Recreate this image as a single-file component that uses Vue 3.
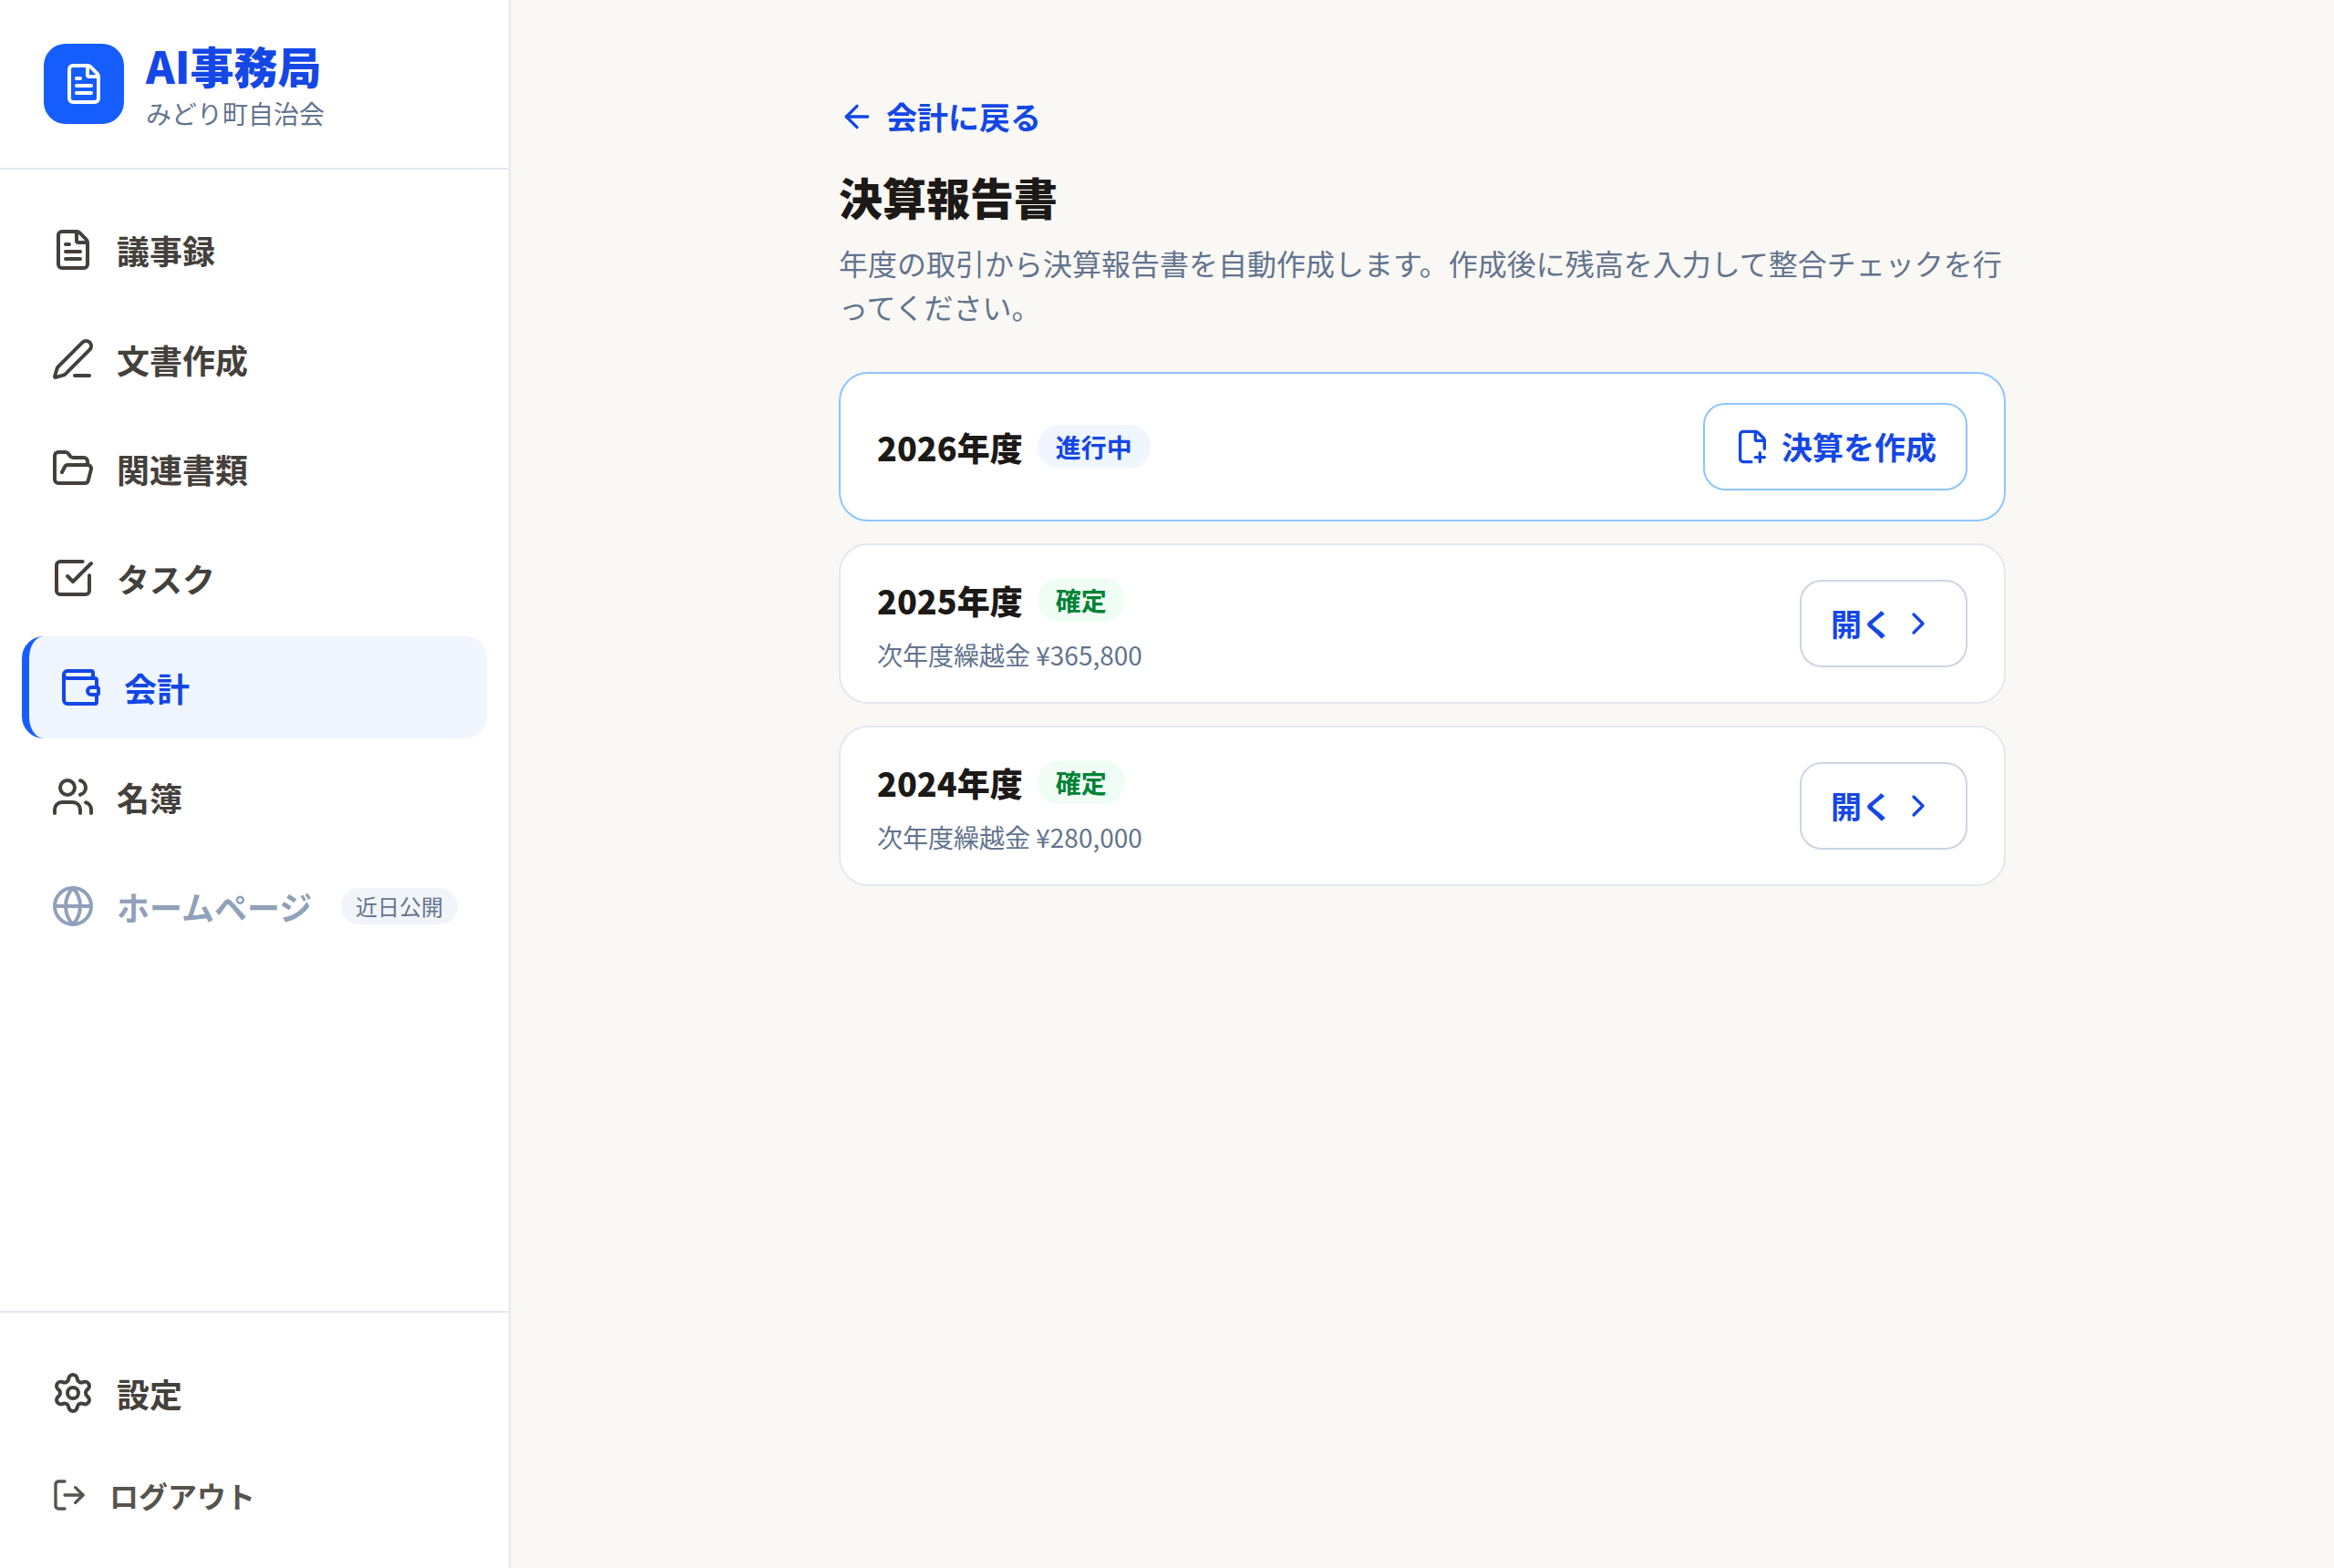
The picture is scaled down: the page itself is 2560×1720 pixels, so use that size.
<!-- src/App.vue -->
<template>
  <div class="app-shell">
    <aside class="sidebar">
      <div class="brand">
        <div class="brand-logo">
          <svg class="icon" viewBox="0 0 24 24">
            <path v-for="d in icons.file" :key="d" :d="d" />
          </svg>
        </div>
        <div class="brand-text">
          <p class="brand-name">AI事務局</p>
          <p class="brand-org">みどり町自治会</p>
        </div>
      </div>

      <nav class="nav">
        <a
          v-for="item in navItems"
          :key="item.label"
          class="nav-item"
          :class="{ active: item.active, disabled: item.soon }"
        >
          <svg class="icon" viewBox="0 0 24 24">
            <path v-for="d in icons[item.icon]" :key="d" :d="d" />
          </svg>
          <span>{{ item.label }}</span>
          <span v-if="item.soon" class="soon-tag">近日公開</span>
        </a>
      </nav>

      <div class="sidebar-footer">
        <a class="nav-item">
          <svg class="icon" viewBox="0 0 24 24">
            <path v-for="d in icons.settings" :key="d" :d="d" />
          </svg>
          <span>設定</span>
        </a>
        <button class="logout">
          <svg class="icon icon-sm" viewBox="0 0 24 24">
            <path v-for="d in icons.logout" :key="d" :d="d" />
          </svg>
          <span>ログアウト</span>
        </button>
      </div>
    </aside>

    <main class="main">
      <div class="content">
        <a class="back-link">
          <svg class="icon icon-sm" viewBox="0 0 24 24">
            <path v-for="d in icons.arrowLeft" :key="d" :d="d" />
          </svg>
          <span>会計に戻る</span>
        </a>
        <h1 class="page-title">決算報告書</h1>
        <p class="page-lead">
          年度の取引から決算報告書を自動作成します。作成後に残高を入力して整合チェックを行ってください。
        </p>

        <ul class="year-list">
          <li
            v-for="y in years"
            :key="y.year"
            class="year-card"
            :class="{ current: !y.closed }"
          >
            <div>
              <div class="year-head">
                <span class="year-name">{{ y.year }}年度</span>
                <span class="badge" :class="y.closed ? 'badge-done' : 'badge-open'">
                  {{ y.closed ? '確定' : '進行中' }}
                </span>
              </div>
              <p v-if="y.closed" class="year-carry">次年度繰越金 {{ formatYen(y.carry) }}</p>
            </div>
            <button v-if="y.closed" class="btn btn-open">
              <span>開く</span>
              <svg class="icon icon-sm" viewBox="0 0 24 24">
                <path v-for="d in icons.chevronRight" :key="d" :d="d" />
              </svg>
            </button>
            <button v-else class="btn btn-create">
              <svg class="icon icon-sm" viewBox="0 0 24 24">
                <path v-for="d in icons.filePlus" :key="d" :d="d" />
              </svg>
              <span>決算を作成</span>
            </button>
          </li>
        </ul>
      </div>
    </main>
  </div>
</template>

<script setup>
import { ref } from 'vue'

// 線アイコンのパス（24x24 グリッド）
const icons = {
  file: [
    'M6 22a2 2 0 0 1-2-2V4a2 2 0 0 1 2-2h8a2.4 2.4 0 0 1 1.704.706l3.588 3.588A2.4 2.4 0 0 1 20 8v12a2 2 0 0 1-2 2z',
    'M14 2v5a1 1 0 0 0 1 1h5',
    'M10 9H8',
    'M16 13H8',
    'M16 17H8'
  ],
  pen: [
    'M13 21h8',
    'M21.174 6.812a1 1 0 0 0-3.986-3.987L3.842 16.174a2 2 0 0 0-.5.83l-1.321 4.352a.5.5 0 0 0 .623.622l4.353-1.32a2 2 0 0 0 .83-.497z'
  ],
  folder: [
    'm6 14 1.5-2.9A2 2 0 0 1 9.24 10H20a2 2 0 0 1 1.94 2.5l-1.54 6a2 2 0 0 1-1.95 1.5H4a2 2 0 0 1-2-2V5a2 2 0 0 1 2-2h3.9a2 2 0 0 1 1.69.9l.81 1.2a2 2 0 0 0 1.67.9H18a2 2 0 0 1 2 2v2'
  ],
  check: [
    'M21 10.656V19a2 2 0 0 1-2 2H5a2 2 0 0 1-2-2V5a2 2 0 0 1 2-2h12.344',
    'm9 11 3 3L22 4'
  ],
  wallet: [
    'M19 7V4a1 1 0 0 0-1-1H5a2 2 0 0 0 0 4h15a1 1 0 0 1 1 1v4h-3a2 2 0 0 0 0 4h3a1 1 0 0 0 1-1v-2a1 1 0 0 0-1-1',
    'M3 5v14a2 2 0 0 0 2 2h15a1 1 0 0 0 1-1v-4'
  ],
  users: [
    'M16 21v-2a4 4 0 0 0-4-4H6a4 4 0 0 0-4 4v2',
    'M16 3.128a4 4 0 0 1 0 7.744',
    'M22 21v-2a4 4 0 0 0-3-3.87',
    'M5 7a4 4 0 1 0 8 0a4 4 0 1 0-8 0'
  ],
  globe: [
    'M2 12a10 10 0 1 0 20 0a10 10 0 1 0-20 0',
    'M12 2a14.5 14.5 0 0 0 0 20 14.5 14.5 0 0 0 0-20',
    'M2 12h20'
  ],
  settings: [
    'M9.671 4.136a2.34 2.34 0 0 1 4.659 0 2.34 2.34 0 0 0 3.319 1.915 2.34 2.34 0 0 1 2.33 4.033 2.34 2.34 0 0 0 0 3.831 2.34 2.34 0 0 1-2.33 4.033 2.34 2.34 0 0 0-3.319 1.915 2.34 2.34 0 0 1-4.659 0 2.34 2.34 0 0 0-3.32-1.915 2.34 2.34 0 0 1-2.33-4.033 2.34 2.34 0 0 0 0-3.831A2.34 2.34 0 0 1 6.35 6.051a2.34 2.34 0 0 0 3.319-1.915',
    'M9 12a3 3 0 1 0 6 0a3 3 0 1 0-6 0'
  ],
  logout: ['m16 17 5-5-5-5', 'M21 12H9', 'M9 21H5a2 2 0 0 1-2-2V5a2 2 0 0 1 2-2h4'],
  arrowLeft: ['m12 19-7-7 7-7', 'M19 12H5'],
  chevronRight: ['m9 18 6-6-6-6'],
  filePlus: [
    'M11.35 22H6a2 2 0 0 1-2-2V4a2 2 0 0 1 2-2h8a2.4 2.4 0 0 1 1.706.706l3.588 3.588A2.4 2.4 0 0 1 20 8v5.35',
    'M14 2v5a1 1 0 0 0 1 1h5',
    'M14 19h6',
    'M17 16v6'
  ]
}

const navItems = ref([
  { label: '議事録', icon: 'file' },
  { label: '文書作成', icon: 'pen' },
  { label: '関連書類', icon: 'folder' },
  { label: 'タスク', icon: 'check' },
  { label: '会計', icon: 'wallet', active: true },
  { label: '名簿', icon: 'users' },
  { label: 'ホームページ', icon: 'globe', soon: true }
])

const years = ref([
  { year: 2026, closed: false },
  { year: 2025, closed: true, carry: 365800 },
  { year: 2024, closed: true, carry: 280000 }
])

const formatYen = (n) => '¥' + n.toLocaleString('en-US')
</script>

<style>
body {
  margin: 0;
  background: #faf8f4;
}
</style>

<style scoped>
.app-shell {
  display: flex;
  height: 100vh;
  overflow: hidden;
  background: #faf8f4;
  color: #1c1917;
  font-family: "Noto Sans CJK JP", sans-serif;
  font-size: 36px;
  line-height: 1.5;
}

p,
h1,
ul {
  margin: 0;
  padding: 0;
}

.icon {
  width: 48px;
  height: 48px;
  flex-shrink: 0;
  fill: none;
  stroke: currentColor;
  stroke-width: 2;
  stroke-linecap: round;
  stroke-linejoin: round;
}

.icon-sm {
  width: 40px;
  height: 40px;
}

.sidebar {
  box-sizing: border-box;
  width: 560px;
  flex-shrink: 0;
  display: flex;
  flex-direction: column;
  background: #ffffff;
  border-right: 2px solid #e2e8f0;
}

.brand {
  display: flex;
  align-items: center;
  gap: 24px;
  height: 88px;
  padding: 48px;
  border-bottom: 2px solid #e2e8f0;
}

.brand-logo {
  width: 88px;
  height: 88px;
  display: flex;
  align-items: center;
  justify-content: center;
  border-radius: 24px;
  background: #155dfc;
  color: #ffffff;
}

.brand-name {
  font-size: 48px;
  font-weight: 800;
  line-height: 64px;
  color: #1447e6;
}

.brand-org {
  font-size: 28px;
  line-height: 42px;
  color: #62748e;
}

.nav {
  flex: 1;
  display: flex;
  flex-direction: column;
  gap: 8px;
  padding: 32px 24px;
}

.nav-item {
  box-sizing: border-box;
  display: flex;
  align-items: center;
  gap: 24px;
  height: 112px;
  padding: 0 32px;
  border-radius: 24px;
  color: #44403b;
  font-weight: 700;
}

.nav-item.active {
  border-left: 8px solid #155dfc;
  background: #eff6ff;
  color: #1447e6;
}

.nav-item.disabled {
  color: #90a1b9;
}

.soon-tag {
  margin-left: auto;
  padding: 4px 16px;
  border-radius: 20px;
  background: #f1f5f9;
  color: #62748e;
  font-size: 24px;
  font-weight: 400;
  line-height: 32px;
}

.sidebar-footer {
  display: flex;
  flex-direction: column;
  gap: 8px;
  padding: 32px 24px;
  border-top: 2px solid #e2e8f0;
}

.logout {
  display: flex;
  align-items: center;
  gap: 24px;
  height: 96px;
  padding: 0 32px;
  border: none;
  background: none;
  color: #57534d;
  font-family: inherit;
  font-size: 32px;
  font-weight: 700;
}

.main {
  flex: 1;
  padding: 80px 0;
}

.content {
  width: 1280px;
  margin: 0 auto;
}

.back-link {
  display: flex;
  align-items: center;
  gap: 12px;
  height: 96px;
  color: #1447e6;
  font-size: 34px;
  font-weight: 700;
  line-height: 48px;
}

.page-title {
  margin-top: 8px;
  font-size: 48px;
  font-weight: 800;
  line-height: 62px;
}

.page-lead {
  margin-top: 18px;
  color: #62748e;
  font-size: 32px;
  line-height: 48px;
}

.year-list {
  display: flex;
  flex-direction: column;
  gap: 24px;
  margin-top: 48px;
  list-style: none;
}

.year-card {
  display: flex;
  align-items: center;
  justify-content: space-between;
  padding: 32px 40px;
  border: 2px solid #e2e8f0;
  border-radius: 32px;
  background: #ffffff;
}

.year-card.current {
  border-color: #8ec5ff;
}

.year-head {
  display: flex;
  align-items: center;
  gap: 16px;
  height: 56px;
}

.year-name {
  font-size: 36px;
  font-weight: 800;
}

.badge {
  padding: 3px 20px;
  border-radius: 24px;
  font-size: 28px;
  font-weight: 700;
  line-height: 42px;
}

.badge-open {
  background: #eff6ff;
  color: #1447e6;
}

.badge-done {
  background: #f0fdf4;
  color: #008236;
}

.year-carry {
  margin-top: 12px;
  color: #62748e;
  font-size: 28px;
  line-height: 40px;
}

.btn {
  box-sizing: border-box;
  display: flex;
  align-items: center;
  height: 96px;
  padding: 0 32px;
  border: 2px solid #cad5e2;
  border-radius: 24px;
  background: #ffffff;
  color: #1447e6;
  font-family: inherit;
  font-size: 34px;
  font-weight: 700;
  line-height: 48px;
}

.btn-open {
  gap: 8px;
}

.btn-create {
  gap: 12px;
  border-color: #8ec5ff;
}
</style>
